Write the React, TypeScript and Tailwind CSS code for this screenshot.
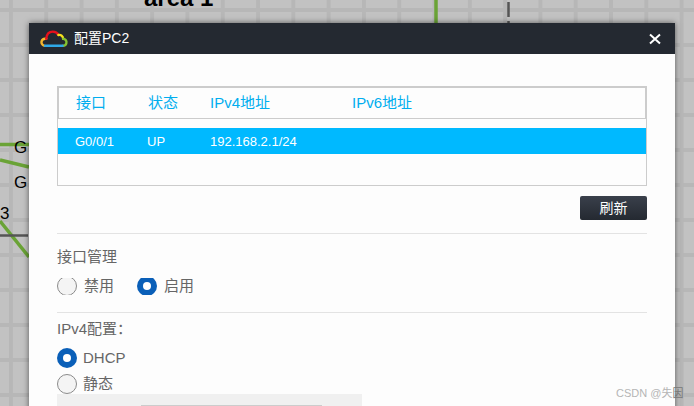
const FONT = "font-['Liberation_Sans','Noto_Sans_CJK_SC',sans-serif]";

function CloudLogo() {
  return (
    <svg width="28" height="18" viewBox="0 0 28 18" fill="none" strokeWidth="2.4" strokeLinecap="round">
      <path d="M4.500 15.800 C2 15.200 1.200 13 1.600 11.400 C2.100 9.400 4 8.400 6.200 8.800" stroke="#f5b82e" />
      <path d="M6.200 8.800 C6.600 4 9.500 1.600 12.800 1.600 C15.400 1.600 17.400 2.800 18.400 5" stroke="#e8101c" />
      <path d="M18.400 5 C20.800 4.400 23 6 23.200 8.800" stroke="#f7e01c" />
      <path d="M23.200 8.800 C25.600 9.200 26.800 11 26.400 13 C26 14.800 24.600 15.800 23 15.800" stroke="#84c232" />
      <path d="M5 15.800 H22.600" stroke="#2fa9e8" />
    </svg>
  );
}

function Radio({ on, clip, label, className = '' }: { on?: boolean; clip?: boolean; label: string; className?: string }) {
  return (
    <div className={`flex items-center ${clip ? 'gap-[7px]' : 'gap-[6px]'} ${className}`}>
      <span className={`w-5 flex items-center overflow-hidden ${clip ? 'h-[17px]' : 'h-5'}`}>
        {on ? (
          <span className="shrink-0 w-5 h-5 rounded-full bg-[#0a5fb8] flex items-center justify-center">
            <span className="w-2 h-2 rounded-full bg-white" />
          </span>
        ) : (
          <span className="shrink-0 w-5 h-5 rounded-full bg-[#f4f4f4] border border-[#8a8a8a]" />
        )}
      </span>
      <span className="text-[15px] leading-5 text-[#666]">{label}</span>
    </div>
  );
}

function Canvas() {
  return (
    <>
      <svg className="absolute inset-0" width="694" height="406" fill="none">
        <path d="M0 144.500 H29" stroke="#6aa336" strokeWidth="3.500" />
        <path d="M0 160 L29 167" stroke="#6aa336" strokeWidth="3.500" />
        <path d="M0 221 L29 257" stroke="#6aa336" strokeWidth="3.500" />
        <path d="M0 235.500 H28" stroke="#555" strokeWidth="2.500" />
        <path d="M436 0 V23" stroke="#6aa336" strokeWidth="3.500" />
        <path d="M508.500 2 V17 M508.500 21 V23" stroke="#555" strokeWidth="2.500" />
      </svg>
      <div className="absolute left-[144px] top-[-15px] font-['Liberation_Sans',sans-serif] font-bold text-[24px] leading-[25px] text-black">
        area 1
      </div>
      <div className="absolute left-[14px] top-[139px] font-['Liberation_Sans',sans-serif] text-[17px] leading-[18px] text-black">G</div>
      <div className="absolute left-[14px] top-[174px] font-['Liberation_Sans',sans-serif] text-[17px] leading-[18px] text-black">G</div>
      <div className="absolute left-0 top-[205px] font-['Liberation_Sans',sans-serif] text-[17px] leading-[18px] text-black">3</div>
    </>
  );
}

export default function App() {
  return (
    <div
      className={`relative w-[694px] h-[406px] overflow-hidden bg-[#c2c2c2] ${FONT} bg-[linear-gradient(to_right,#b7b7b7_4px,transparent_4px),linear-gradient(to_bottom,#b7b7b7_4px,transparent_4px)] bg-[length:35.3px_35px] bg-[position:9px_8px]`}
    >
      <Canvas />

      {/* config window */}
      <div className="absolute left-[29px] top-[23px] w-[646px] h-[400px] bg-[#fdfdfd] shadow-[0_0_6px_rgba(0,0,0,0.55)]">
        <div className="h-[31px] bg-[#242931] flex items-center pl-[11px] pr-[14px]">
          <CloudLogo />
          <span className="ml-[6px] text-[14px] text-white">配置PC2</span>
          <svg className="ml-auto" width="12" height="12" viewBox="0 0 12 12" stroke="#fff" strokeWidth="2">
            <path d="M1 1.500 L11 10.500 M11 1.500 L1 10.500" />
          </svg>
        </div>

        <div className="pt-[32px] px-[28px]">
          <div className="w-[590px] h-[100px] border border-[#ccc]">
            <div className="h-[32px] border border-[#ccc] flex items-center text-[15px] text-[#00aeef]">
              <span className="ml-[17px] w-[72px]">接口</span>
              <span className="w-[62px]">状态</span>
              <span className="w-[142px]">IPv4地址</span>
              <span>IPv6地址</span>
            </div>
            <div className="mt-[9px] h-[26px] pt-[1px] bg-[#00b9ff] flex items-center text-[13px] text-white">
              <span className="ml-[17px] w-[72px]">G0/0/1</span>
              <span className="w-[63px]">UP</span>
              <span>192.168.2.1/24</span>
            </div>
          </div>

          <div className="mt-[10px] flex justify-end">
            <button className="w-[67px] h-[24px] rounded-[2px] bg-[linear-gradient(to_bottom,#3a404b,#242931)] text-[14px] text-white">
              刷新
            </button>
          </div>

          <div className="mt-[13px] border-t border-[#e3e3e3]" />
          <div className="mt-[13px] text-[15px] leading-5 text-[#666]">接口管理</div>
          <div className="mt-[9px] flex items-center">
            <Radio clip label="禁用" />
            <Radio clip on label="启用" className="ml-[23px]" />
          </div>

          <div className="mt-[16px] border-t border-[#e3e3e3]" />
          <div className="mt-[6px] text-[15px] leading-5 text-[#666]">IPv4配置：</div>
          <Radio on label="DHCP" className="mt-[9px]" />
          <Radio label="静态" className="mt-[6px]" />

          <div className="w-[305px] h-[40px] bg-[#f0f0f0] pt-[11px] pl-[84px]">
            <div className="w-[181px] h-[20px] bg-white border border-[#ccc]" />
          </div>
        </div>
      </div>

      <div className="absolute left-[616px] top-[386px] text-[11px] leading-[14px] text-[#b5b5b5]">
        CSDN @失<span className="text-[#777]">因</span>
      </div>
    </div>
  );
}
